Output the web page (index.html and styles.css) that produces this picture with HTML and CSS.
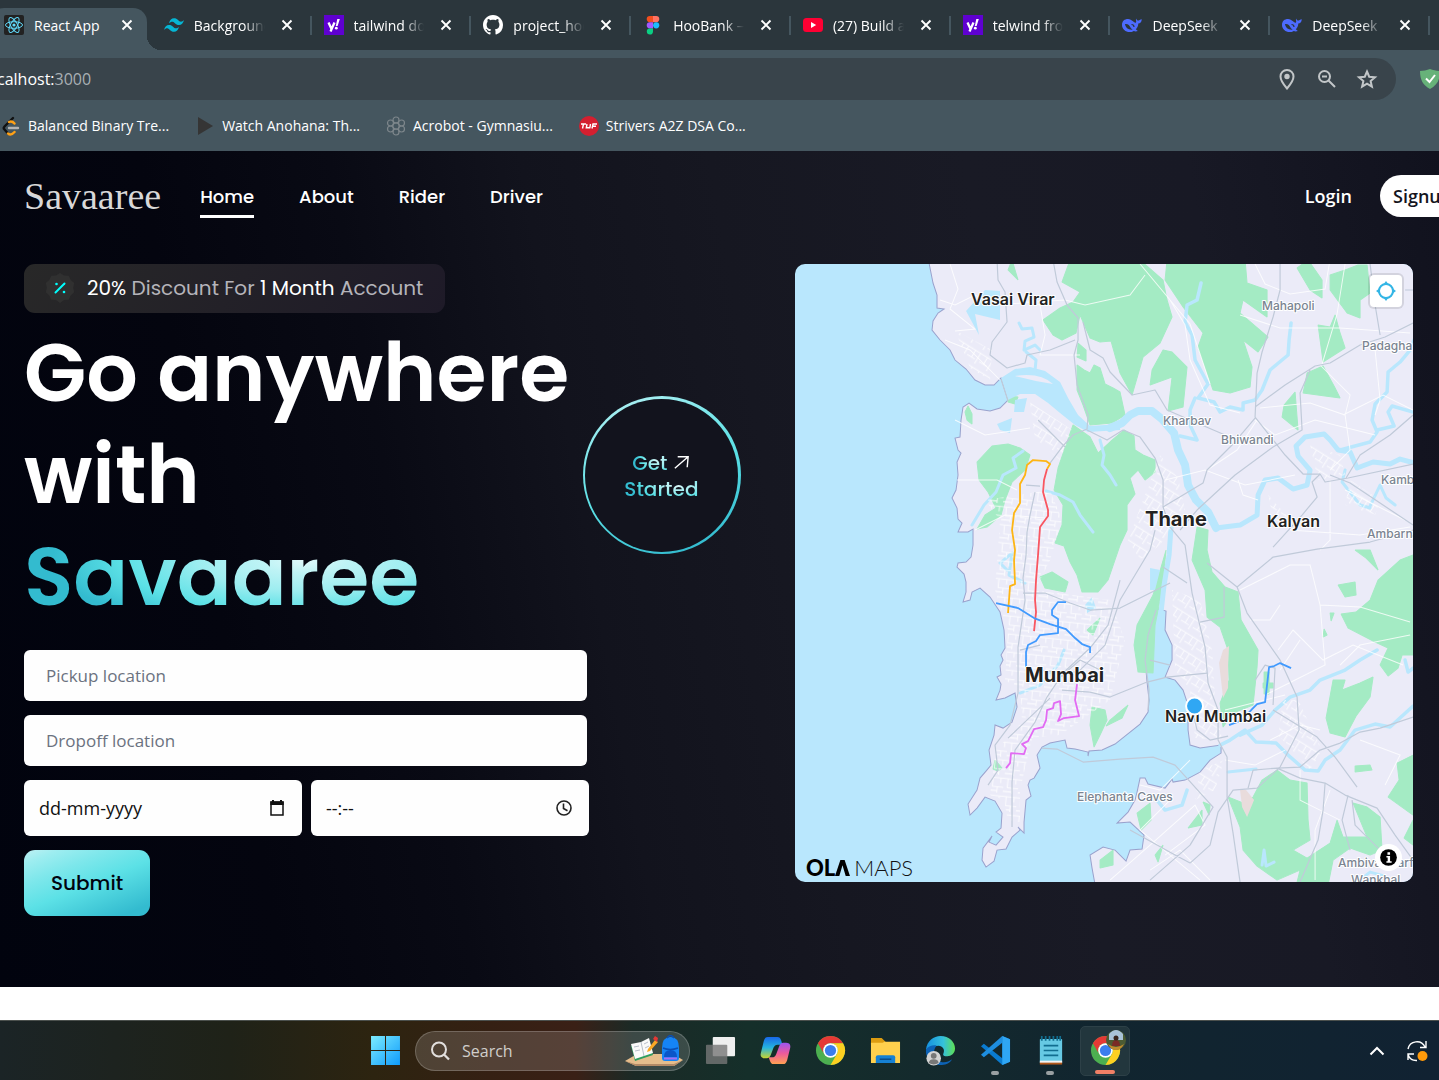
FILE: index.html
```html
<!DOCTYPE html>
<html lang="en">
<head>
  <meta charset="UTF-8">
  <meta name="viewport" content="width=device-width, initial-scale=1">
  <title>Savaaree</title>
  <link rel="stylesheet" href="styles.css">
</head>
<body>

<!-- shared icons -->
<svg class="defs" width="0" height="0" aria-hidden="true">
  <symbol id="close" viewBox="0 0 12 12"><path d="M1.5 1.5l9 9M10.5 1.5l-9 9" fill="none" stroke="#fff" stroke-width="1.9"/></symbol>
  <symbol id="yahoo" viewBox="0 0 20 20"><rect width="20" height="20" fill="#5f01d1"/><path d="M4.500 7.500l2.800 6M10.500 7.500L6.500 16.500" stroke="#fff" stroke-width="2.300" fill="none"/><path d="M15.800 4h-2.500l-1.500 7h1.800z" fill="#fff"/><circle cx="12.300" cy="13.200" r="1.400" fill="#fff"/></symbol>
  <symbol id="whale" viewBox="0 0 20 20"><path d="M0 10c0-4 2.500-6 6-6 2 0 3.500 1 5 2.300C12 7.500 13.500 8 14 7.500c.7-.7-.5-2 .1-4 .7 1.500 1.200 2 2 2 1 0 2-1 3.700-1.300-.3 3-1.500 4-3.500 4.300-.1 3-1.300 4.700-2.500 5.800l2 1.700c-2 .7-3 .4-4-.1C6.500 19 0 15.500 0 10z" fill="#4d6bfe"/><path d="M3 9c3-.5 4.500 1.500 5.500 3.500.5 1 1.500 1.800 2.500 2-4 .8-7.500-1.500-8-5.500z" fill="#2b363c"/><path d="M9.500 9.500c1.300 0 2.500 1 2.500 2.500" stroke="#2b363c" fill="none" stroke-width="1.200"/></symbol>
  <symbol id="chrome" viewBox="0 0 32 32">
    <circle cx="16" cy="16" r="15" fill="#4caf50"/>
    <path d="M3 8.500A15 15 0 0 1 29 8.500H16a7.500 7.500 0 0 0-6.500 11.300z" fill="#e53935"/>
    <path d="M29 8.500A15 15 0 0 1 16 31l6.500-11.200A7.500 7.500 0 0 0 16 8.500z" fill="#fdd021"/>
    <circle cx="16" cy="16" r="7.500" fill="#fff"/><circle cx="16" cy="16" r="5.800" fill="#3b7ded"/>
  </symbol>
</svg>

<header class="browser">
  <div class="tabs">
    <div class="tab active">
      <svg class="tab-icon" viewBox="0 0 20 20"><rect width="20" height="20" rx="2" fill="#222"/><g fill="none" stroke="#61dafb"><ellipse cx="10" cy="10" rx="8.500" ry="3.300"/><ellipse cx="10" cy="10" rx="8.500" ry="3.300" transform="rotate(60 10 10)"/><ellipse cx="10" cy="10" rx="8.500" ry="3.300" transform="rotate(120 10 10)"/></g><circle cx="10" cy="10" r="1.600" fill="#61dafb"/></svg>
      <span class="tab-title">React App</span>
      <button class="tab-close" aria-label="Close tab"><svg><use href="#close"/></svg></button>
    </div>
    <div class="tab">
      <svg class="tab-icon" viewBox="0 0 24 24"><path d="M6 10q1.500-6 6-6c4.500 0 5.100 3.400 7.300 3.900 1.700.4 3.200-.2 4.700-1.900q-1.500 6-6 6c-4.500 0-5.100-3.400-7.300-3.900C9 7.700 7.500 8.300 6 10zM0 18q1.500-6 6-6c4.500 0 5.100 3.400 7.300 3.900 1.700.4 3.200-.2 4.700-1.900q-1.500 6-6 6c-4.500 0-5.100-3.400-7.300-3.900C3 15.700 1.500 16.300 0 18z" fill="#06b6d4"/></svg>
      <span class="tab-title">Background Color</span>
      <button class="tab-close" aria-label="Close tab"><svg><use href="#close"/></svg></button>
    </div>
    <div class="tab">
      <svg class="tab-icon"><use href="#yahoo"/></svg>
      <span class="tab-title">tailwind docs</span>
      <button class="tab-close" aria-label="Close tab"><svg><use href="#close"/></svg></button>
    </div>
    <div class="tab">
      <svg class="tab-icon" viewBox="0 0 16 16"><path fill="#fff" d="M8 0C3.580 0 0 3.580 0 8c0 3.540 2.290 6.530 5.470 7.590.4.070.55-.17.55-.38 0-.19-.01-.82-.01-1.490-2.010.37-2.530-.49-2.690-.94-.09-.23-.48-.94-.82-1.130-.28-.15-.68-.52-.01-.53.63-.01 1.080.58 1.230.82.72 1.210 1.870.87 2.330.66.070-.52.28-.87.51-1.070-1.780-.2-3.640-.89-3.640-3.950 0-.87.310-1.590.82-2.150-.08-.2-.36-1.020.080-2.120 0 0 .67-.21 2.200.82.64-.18 1.320-.27 2-.27s1.360.09 2 .27c1.530-1.040 2.200-.82 2.200-.82.44 1.100.16 1.920.080 2.120.51.56.82 1.270.82 2.150 0 3.070-1.870 3.750-3.650 3.950.29.25.54.73.54 1.480 0 1.070-.01 1.930-.01 2.200 0 .21.150.46.55.38A8.010 8.010 0 0 0 16 8c0-4.420-3.580-8-8-8z"/></svg>
      <span class="tab-title">project_hoobank</span>
      <button class="tab-close" aria-label="Close tab"><svg><use href="#close"/></svg></button>
    </div>
    <div class="tab">
      <svg class="tab-icon" viewBox="0 0 20 20"><path d="M10 1H6.800a3.100 3.100 0 0 0 0 6.200H10z" fill="#f24e1e"/><path d="M10 1h3.200a3.100 3.100 0 0 1 0 6.200H10z" fill="#ff7262"/><path d="M10 7.200H6.800a3.100 3.100 0 0 0 0 6.200H10z" fill="#a259ff"/><circle cx="13.200" cy="10.300" r="3.100" fill="#1abcfe"/><path d="M10 13.400H6.800a3.100 3.100 0 1 0 3.200 3.100z" fill="#0acf83"/></svg>
      <span class="tab-title">HooBank — Figma</span>
      <button class="tab-close" aria-label="Close tab"><svg><use href="#close"/></svg></button>
    </div>
    <div class="tab">
      <svg class="tab-icon" viewBox="0 0 20 20"><rect y="3" width="20" height="14" rx="3.500" fill="#f03"/><path d="M8 7l5.200 3L8 13z" fill="#fff"/></svg>
      <span class="tab-title">(27) Build and Deploy</span>
      <button class="tab-close" aria-label="Close tab"><svg><use href="#close"/></svg></button>
    </div>
    <div class="tab">
      <svg class="tab-icon"><use href="#yahoo"/></svg>
      <span class="tab-title">telwind from</span>
      <button class="tab-close" aria-label="Close tab"><svg><use href="#close"/></svg></button>
    </div>
    <div class="tab">
      <svg class="tab-icon"><use href="#whale"/></svg>
      <span class="tab-title">DeepSeek</span>
      <button class="tab-close" aria-label="Close tab"><svg><use href="#close"/></svg></button>
    </div>
    <div class="tab">
      <svg class="tab-icon"><use href="#whale"/></svg>
      <span class="tab-title">DeepSeek</span>
      <button class="tab-close" aria-label="Close tab"><svg><use href="#close"/></svg></button>
    </div>
  </div>

  <div class="toolbar">
    <div class="address">
      <p class="url">calhost:<span>3000</span></p>
      <button aria-label="Location"><svg viewBox="0 0 24 24"><path d="M12 3c-3.700 0-6.500 2.800-6.500 6.500C5.500 14 12 21.500 12 21.500S18.500 14 18.500 9.500C18.500 5.800 15.700 3 12 3z"/><circle cx="12" cy="9.500" r="1.700" fill="#c2c6c8"/></svg></button>
      <button aria-label="Zoom"><svg viewBox="0 0 24 24"><circle cx="9.500" cy="9.500" r="5.500"/><path d="M13.500 13.500l6.500 6.500M7 9.500h5"/></svg></button>
      <button aria-label="Bookmark this page"><svg viewBox="0 0 24 24"><path d="M12 4.500l2.200 5.200 5.800.500-4.400 3.800 1.300 5.600-4.900-3-4.900 3 1.300-5.600L4 10.200l5.800-.500z"/></svg></button>
    </div>
    <svg class="shield" viewBox="0 0 22 22"><path d="M11 1C8 2 4 3 1 3c0 9 3 14 10 18 7-4 10-9 10-18-3 0-7-1-10-2z" fill="#67b279"/><path d="M7 10.500l3.500 3.500L16 7" fill="none" stroke="#fff" stroke-width="2"/></svg>
  </div>

  <nav class="bookmarks">
    <a href="#"><svg viewBox="0 0 20 20" fill="none" stroke-width="2.400" stroke-linecap="round"><path d="M12 2L3.500 10.500q-1.500 1.500 0 3L7 17.500" stroke="#111"/><path d="M8 6q3-1.500 5.500 1.500M7 17.500q3 2.500 6.500-1.500" stroke="#ffa116"/><path d="M8 12h9" stroke="#b3b3b3"/></svg>Balanced Binary Tre...</a>
    <a href="#"><svg viewBox="0 0 20 20"><path d="M3 1l15 9-15 9z" fill="#353535"/></svg>Watch Anohana: Th...</a>
    <a href="#"><svg viewBox="0 0 20 20" fill="none" stroke="#7d868b" stroke-width="1.200"><circle cx="10" cy="10" r="3.200"/><circle cx="10" cy="4" r="3"/><circle cx="10" cy="16" r="3"/><circle cx="4.500" cy="7" r="3"/><circle cx="15.500" cy="7" r="3"/><circle cx="4.500" cy="13" r="3"/><circle cx="15.500" cy="13" r="3"/></svg>Acrobot - Gymnasiu...</a>
    <a href="#"><svg viewBox="0 0 20 20"><circle cx="10" cy="10" r="10" fill="#d41f30"/><path d="M2 8h5M4.500 8l-1 4.500M8 8l-.7 3.800h3.500L11.500 8M13 12.500L14 8h4M13.500 10.300h3.500" fill="none" stroke="#fff" stroke-width="1.400"/></svg>Strivers A2Z DSA Co...</a>
  </nav>
</header>

<div class="hero">
  <nav class="navbar">
    <a href="#" class="logo">Savaaree</a>
    <ul class="nav-links">
      <li><a href="#" class="current">Home</a></li>
      <li><a href="#">About</a></li>
      <li><a href="#">Rider</a></li>
      <li><a href="#">Driver</a></li>
    </ul>
    <div class="account">
      <a href="#" class="login">Login</a>
      <button class="signup">Signup</button>
    </div>
  </nav>

  <main class="hero-body">
    <section>
      <div class="discount">
        <svg viewBox="0 0 32 32"><path d="M16 1l4 2.500 4.700.300 2 4.200 3.500 3-1 4.700 1 4.600-3.500 3.200-2 4.200-4.700.300L16 31l-4-3-4.700-.300-2-4.200-3.500-3.200 1-4.600-1-4.700 3.500-3 2-4.200L12 3.500z" fill="#303030"/><path d="M20.500 11.500l-9 9" stroke="#0ff" stroke-width="2" stroke-linecap="round"/><circle cx="12.500" cy="12" r="1.300" fill="#0ff"/><circle cx="20" cy="20" r="1.300" fill="#0ff"/></svg>
        <p><b>20%</b> Discount For <b>1 Month</b> Account</p>
      </div>

      <div class="headline">
        <h1>Go anywhere<br>with<br><span class="text-gradient">Savaaree</span></h1>
        <a href="#" class="get-started">
          <span class="get-started-inner">
            <span class="get-row"><span class="text-gradient">Get</span><svg viewBox="0 0 20 20" fill="none" stroke="#fff" stroke-width="1.500"><path d="M3 16L17 4M6 4h11l-1 11"/></svg></span>
            <span class="text-gradient">Started</span>
          </span>
        </a>
      </div>

      <form class="booking">
        <input class="place" type="text" placeholder="Pickup location" aria-label="Pickup location">
        <input class="place" type="text" placeholder="Dropoff location" aria-label="Dropoff location">
        <div class="when">
          <label class="picker">
            <input type="text" placeholder="dd-mm-yyyy" aria-label="Date">
            <svg viewBox="0 0 20 20"><path d="M4 4h12v13H4z" fill="none" stroke="#111" stroke-width="1.500"/><path d="M3.300 3.500h13.400V7H3.300zM5 2h2v2.500H5zM13 2h2v2.500h-2z" fill="#111"/></svg>
          </label>
          <label class="picker">
            <input type="text" placeholder="--:--" aria-label="Time">
            <svg viewBox="0 0 20 20" fill="none" stroke="#222" stroke-width="1.600"><circle cx="10" cy="10" r="7"/><path d="M9.500 5.500v5l4 2.300"/></svg>
          </label>
        </div>
        <button type="submit" class="submit">Submit</button>
      </form>
    </section>

    <section class="map">
      <svg class="map-canvas" viewBox="795 264 618 618" preserveAspectRatio="xMidYMid slice">
        <defs>
          <pattern id="streets" width="15" height="18" patternUnits="userSpaceOnUse" patternTransform="rotate(6)">
            <path d="M0 3h15M4 3v9M4 12h11M9 12v6M12 3v5M0 16h9" class="street"/>
          </pattern>
          <pattern id="streets-slant" width="14" height="16" patternUnits="userSpaceOnUse" patternTransform="rotate(32)">
            <path d="M0 4h14M5 4v8M0 12h9M11 4v12" class="street"/>
          </pattern>
        </defs>

        <rect x="795" y="264" width="618" height="618" fill="#b9e7fd"/>

        <!-- land -->
        <path class="land" d="M928 258L933 283 937 295 937 308 944 309 938 313 933 321 932 330 940 340 950 350 955 360 966 369 975 380 985 385 994 385 1001 378 1008 400 1000 408 990 411 977 409 969 403 963 407 961 420 960 437 955 438 958 450 961 453 957 462 958 475 956 490 952 498 957 508 958 519 962 523 958 532 968 532 973 529 973 545 971 557 966 562 958 563 957 567 964 574 966 582 966 592 963 602 970 600 972 592 980 588 990 597 1000 612 1004 630 1005 648 1001 655 1003 660 1000 666 1001 675 997 677 1001 684 1000 690 996 700 1005 698 1015 693 1017 707 1012 722 1003 728 995 725 994 735 989 750 991 765 986 771 980 778 977 790 968 804 970 815 977 808 985 797 995 801 1002 813 1001 828 996 832 1003 837 996 845 989 842 992 836 983 848 982 860 986 867 994 861 997 850 1006 849 1012 837 1020 830 1018 827 1024 833 1024 822 1026 800 1031 796 1028 785 1030 780 1034 778 1040 768 1037 755 1042 747 1050 743 1065 740 1067 748 1075 749 1088 752 1088 756 1089 751 1102 750 1115 744 1140 724 1148 712 1149 700 1147 682 1145 660 1148 635 1156 612 1155 608 1166 611 1165 630 1172 645 1172 660 1165 677 1175 680 1183 690 1188 705 1188 730 1190 745 1200 748 1221 745 1221 753 1210 760 1200 772 1185 780 1173 782 1172 779 1165 788 1148 784 1145 778 1140 778 1137 792 1135 800 1128 812 1117 823 1130 822 1144 835 1142 849 1130 850 1126 861 1115 850 1103 847 1090 855 1092 868 1096 890H1420V258Z"/>

        <!-- forest -->
        <g class="green">
          <path d="M1070 260L1062 282 1080 292 1073 302 1060 308 1043 320 1053 335 1062 340 1076 333 1080 315 1090 338 1100 342 1111 341 1120 373 1132 395 1143 357 1160 343 1172 317 1167 300 1163 280 1140 260Z"/>
          <path d="M1167 260L1165 280 1183 307 1203 333 1198 347 1213 390 1230 393 1250 387 1252 367 1243 340 1258 352 1268 337 1240 313 1243 300 1267 317 1267 290 1247 283 1245 260Z"/>
          <path d="M1150 385L1152 370 1163 350 1172 352 1187 367 1183 407 1168 411 1172 377Z"/>
          <path d="M1077 365L1084 370 1090 373 1094 365 1100 368 1105 384 1113 388 1120 392 1125 415 1112 423 1090 425 1083 405 1077 390Z"/>
          <path d="M1078 343L1086 350 1086 361 1077 357Z"/>
          <path d="M1297 268L1308 260 1322 280 1322 298 1310 290Z"/>
          <path d="M1330 275L1345 270 1358 265 1367 265 1370 293 1360 300 1360 318 1347 313 1330 290Z"/>
          <path d="M1318 325L1330 327 1335 315 1340 333 1345 348 1323 362Z"/>
          <path d="M1307 373L1323 366 1335 388 1340 398 1325 396 1303 393Z"/>
          <path d="M1295 392L1298 430 1282 417 1284 405Z"/>
          <path d="M1073 425L1090 437 1098 453 1112 440 1124 430 1134 436 1135 450 1143 455 1155 460 1155 472 1145 480 1138 470 1130 478 1135 494 1127 505 1127 530 1120 545 1108 580 1098 592 1082 592 1077 575 1070 562 1064 546 1055 543 1062 525 1063 505 1054 490 1058 468Z"/>
          <path d="M977 462L992 446 1008 444 1020 448 1030 455 1025 470 1012 482 1005 500 1001 515 987 527 977 529 985 515 996 508 988 492 979 480Z"/>
          <path d="M968 406L972 414 972 424 967 420 965 412ZM1008 396L1018 397 1015 404 1008 402Z"/>
          <path d="M1197 527L1208 530 1207 550 1212 572 1225 587 1238 592 1241 620 1258 650 1257 667 1253 705 1233 713 1223 727 1220 703 1229 680 1228 650 1220 627 1207 617 1205 590 1192 560Z"/>
          <path d="M1166 550L1153 595 1137 625 1134 645 1138 672 1153 673 1155 625 1162 590Z"/>
          <path d="M1413 555L1400 560 1378 580 1370 600 1356 612 1341 614 1348 628 1375 642 1388 648 1380 665 1388 676 1398 668 1402 655 1413 655ZM1338 585L1355 582 1356 595 1345 597ZM1330 613L1334 613 1331 621ZM1324 629L1327 635 1323 637Z"/>
          <path d="M1333 680L1345 680 1342 690 1360 683 1373 677 1370 697 1356 716 1345 737 1330 733 1326 718Z"/>
          <path d="M1228 797L1243 803 1253 797 1262 780 1277 770 1290 780 1307 783 1308 820 1310 840 1293 850 1307 858 1330 843 1337 820 1343 837 1367 837 1353 803 1367 807 1380 817 1382 850 1370 855 1350 848 1333 860 1327 890H1295L1300 870 1277 880 1257 866 1243 850 1240 827Z"/>
          <path d="M1397 763L1413 755V815L1388 797 1399 780ZM1413 820L1404 838 1413 845ZM1355 766L1370 765 1372 770 1355 772Z"/>
          <path d="M1137 813L1150 803 1151 820 1141 830ZM1188 828L1202 810 1202 825ZM1203 802L1210 805 1209 815Z"/>
          <path d="M1092 707L1105 710 1107 720 1100 735 1094 747 1090 725ZM1110 720L1128 705 1122 718 1106 726ZM1040 577L1052 572 1068 582 1065 592 1045 588ZM995 760L1002 768 998 771 993 769ZM1087 630L1100 618 1093 635ZM1012 260L1018 280 1008 270ZM1355 550L1370 550 1378 570 1366 558ZM1100 860L1113 850 1113 865 1100 868ZM1155 855L1163 845 1158 862Z"/>
          <path d="M1264 672h5v22h-5zM1263 683h10v5h-10z"/>
        </g>
        <path d="M1223 650l6-4-1 20 0 22-5 10-4-35zM1240 790l6 0 8 10-7 17-5-10z" fill="#e9dcdc"/>

        <!-- creeks -->
        <g fill="#b9e7fd">
          <path d="M1001 378L1015 369 1030 367 1045 371 1060 382 1068 398 1078 415 1090 426 1120 424V430L1088 432 1075 425 1060 413 1048 403 1035 394 1020 394 1008 400Z"/>
          <path d="M985 290L1000 291 1000 320 975 314 979 335 966 311ZM997 424L1012 418 1010 433 1000 430ZM1015 400L1027 398 1024 412 1014 412ZM1085 605L1092 597 1096 608 1087 613ZM1150 568L1160 570 1155 590 1150 590Z"/>
        </g>
        <path d="M1015 376q25-4 38 8-20-3-38-8z" fill="#ebebf8"/>
        <g class="creek">
          <path d="M1110 428L1122 423 1130 415 1138 411 1152 411 1162 419 1174 433 1178 450 1185 465 1188 485 1196 500 1208 512 1216 528" stroke-width="8"/>
          <path d="M1216 528L1240 525 1257 515 1258 495 1265 480 1278 478 1293 489 1307 485 1310 470 1298 456 1296 446 1305 437 1324 434 1330 440 1338 450 1350 452 1357 468 1373 462 1390 464 1400 459 1414 463" stroke-width="5"/>
          <path d="M1414 340L1410 350 1400 362 1388 372 1387 392 1375 404 1372 420 1377 432 1370 442 1340 450M1377 430L1394 426 1388 412 1392 406 1413 412M1291 323L1289 340 1288 355 1270 370 1262 390 1255 400 1243 403 1243 410 1230 407 1220 412 1214 402 1198 398 1208 384 1195 360 1192 335 1185 322 1187 305 1197 300 1201 283M1195 398L1190 410 1190 425 1197 440 1180 436" stroke-width="3.500"/>
          <path d="M1040 350L1035 345 1024 350 1025 341 1034 337 1032 328 1022 329 1019 323M1026 352L1036 360 1035 370M1023 451L1013 458 1016 468 1003 475 996 492 984 505 972 525M1046 491L1060 495 1073 502 1080 515 1093 532M1100 440L1104 455 1102 465 1110 475 1116 485M1007 570L1000 563 1012 553 1009 575 1025 583M1064 650L1058 665 1040 685 1020 693" stroke-width="3"/>
          <path d="M1171 527L1169 555 1164 585 1161 612 1160 640" stroke-width="5"/>
          <path d="M1220 745L1230 740 1245 730 1256 742 1276 743 1288 755 1305 770 1318 771 1325 760 1340 750 1355 730 1375 724 1390 727 1413 706M1240 735L1262 725 1275 710 1290 697 1310 690 1320 680 1345 670 1360 660 1377 650M1405 660L1408 672 1413 668M1157 800L1165 810 1182 805 1187 790" stroke-width="3.500"/>
          <path d="M1228 772L1256 769M1353 885L1370 872 1385 876M1262 865L1264 850 1266 866 1274 862M1395 505L1386 498 1380 485 1370 506M1345 470L1342 482 1360 505 1370 508" stroke-width="3"/>
        </g>

        <!-- street grids -->
        <g>
          <path fill="url(#streets)" d="M985 500L1050 490 1062 520 1050 560 1035 590 1110 600 1125 640 1110 700 1060 735 1032 738 1020 790 1020 822 1008 822 1004 800 990 795 996 750 1022 722 1020 690 1005 680 1008 630 995 590 1000 520Z"/>
          <path fill="url(#streets-slant)" d="M1030 402L1072 430 1060 460 1035 440ZM955 330L992 350 990 380 970 368ZM1160 455L1178 478 1185 510 1160 545 1140 560 1128 540ZM1172 590L1200 600 1212 650 1215 700 1222 740 1195 738 1190 690 1175 670ZM1310 445L1340 455 1345 475 1318 480ZM1268 495L1300 530 1275 527ZM1283 700L1298 700 1322 750 1310 770 1278 735ZM1200 770L1224 760 1215 790 1195 800ZM1350 480L1380 500 1375 515 1345 505Z"/>
        </g>
        <g class="street">
          <path d="M940 300l15 5 20-10 20 10 40-3 30-2 20 5 45-10 15-20M950 264l8 25-8 20 25 20-20 2M945 340l25 10 30 30M1020 300l20 5 5 30-5 20 40 0M955 420l30 15 45-7M957 480l40 0 20 10M975 530l30-15 40 3M1170 300l15 25 5 35 20 45 30 8M1140 264l50 60 20 60M1240 315l40 13 60 0 70 5M1255 264l10 20 25 10 35-5 5-30M1322 364l15-50 8-50M1320 365l30 30-5 20-35-12-50 5M1343 415l40-20 30 15M1345 415l5 35-20 20M1375 350l5 50-5 15M1255 420l20 15 40-15 60 15M1207 470l30-20 20-30M1165 480l40-10 40 15 50-10M1238 480l5 15 15 5M1330 480l0 60-10 10M1345 490l60 30M1290 530l70 5 50-8"/>
          <path d="M1240 590l50-25 20 0 10 40 40 2 50 15M1320 605l5 60-60 30M1250 620l20 0 10-15M1278 650l15-20 30 30 30-15 50 20M1300 640l-20 30M1340 665l20-20 50-10M1270 740l30-15 20 5M1300 770l0 30 40 20M1330 790l-15 40 0 50M1360 740l40 15-15 30M1150 870l30-20 30 30M1110 880l40-35 45-40 10 20-40 30M1170 800l-30 30 60 50M1190 760l-30 30-20-5M1225 710l60-15M1225 760l30 5 30-15"/>
        </g>

        <!-- main roads -->
        <g class="road">
          <path d="M997 260L998 280 1005 292 1007 322 992 342 990 355 1007 368 1025 363 1027 355 1050 350 1075 340M1053 260L1057 282 1067 305 1078 318 1078 340 1074 355 1077 385 1088 415 1087 429 1073 435 1062 447 1050 463M1083 322L1090 350 1103 358 1110 372 1132 395 1155 390 1167 410 1190 420 1225 435"/>
          <path d="M1280 260L1280 290 1273 317 1262 352 1257 373 1255 417 1285 455 1303 474 1320 474 1325 482 1348 478 1413 464M1413 323L1385 337 1360 345 1330 363 1315 366 1285 385 1255 407M1310 370L1300 393 1302 430 1273 447 1235 475 1197 510 1180 530M1255 418L1232 445 1207 470 1203 483 1163 507"/>
          <path d="M1087 430L1107 440 1123 430 1140 437 1155 458 1163 480 1163 507 1170 527 1185 545 1192 593 1205 647 1208 683 1218 710 1218 740 1227 757 1227 797 1233 833 1240 882"/>
          <path d="M1320 474L1312 482 1317 497 1302 515 1273 547M1207 563L1237 587 1247 613 1280 660 1297 697 1299 730 1280 767 1257 788 1233 790 1218 812 1210 845 1190 863M1237 587L1273 557 1317 549 1370 542 1413 530M1330 475L1350 483 1413 525M1346 478L1360 455 1390 435 1413 415"/>
          <path d="M1273 710L1317 737 1335 757 1357 787M1413 717L1380 728 1360 732 1340 743 1320 750 1300 767 1277 768 1253 770 1248 788M1277 768L1300 778 1325 783 1345 795 1377 808 1395 835 1413 860M1325 783L1323 810 1318 840 1300 882M1348 795L1342 820 1350 850M1352 800L1355 825 1380 850"/>
          <path d="M1035 492L1030 515 1027 532 1026 555 1023 578 1025 600 1018 647 1018 693 1010 725 995 745 998 770 988 785M1120 580L1108 625 1090 648 1063 673 1047 697 1035 722 1015 750 1012 782 1012 827M1023 593L1045 593 1070 603 1090 610 1120 608 1170 583M1026 485L1040 486M1042 748L1057 749 1083 762 1120 759 1153 757 1175 765 1213 807 1190 845 1150 880M1062 690L1090 692 1110 697 1147 682 1167 677 1207 673M1224 587L1224 617 1200 622M1130 830L1175 855 1190 863M1155 530L1150 550 1135 575 1120 600 1105 645 1080 670 1050 680M1163 567L1187 583M1020 650L1040 645M1040 670L1065 673 1080 660 1100 670M1008 738L1050 698"/>
          <path d="M1156 610L1148 635 1145 660 1149 690 1148 710M1370 264L1375 305 1380 335M1405 290h8M1038 420L1065 447M1001 379L1008 401M1150 660L1170 665M1255 680L1265 665 1275 668 1273 705M1190 700L1197 730 1210 740 1228 736"/>
        </g>

        <!-- metro lines -->
        <g fill="none" stroke-width="1.800" stroke-linejoin="round">
          <path stroke="#fdb515" d="M1008 613L1010 586 1015 584 1014 560 1015 550 1012 530 1014 513 1020 503 1020 484 1025 475 1027 465 1033 460 1046 461 1050 464 1047 469"/>
          <path stroke="#f95661" d="M1047 469L1044 480 1043 492 1048 510 1048 516 1040 527 1038 555 1036 580 1035 600 1036 612 1034 631"/>
          <path stroke="#419afe" d="M996 603L1018 608 1034 618 1050 624 1066 629 1075 638 1082 644 1090 647 1090 653M1066 602L1058 602 1052 610 1052 615 1058 619 1058 633 1040 635 1036 641 1028 645 1026 652 1026 667M1229 725L1242 720 1252 709 1257 704 1265 702 1269 667 1274 666 1280 663 1291 668"/>
          <path stroke="#e26bf3" d="M1077 684L1075 700 1079 716 1064 718 1058 721 1061 714 1060 701 1054 703 1053 708 1047 710 1046 720 1043 727 1034 729 1028 741 1022 744 1026 748 1024 754 1011 753 1010 763 1006 768"/>
        </g>

        <g class="city">
          <text x="971" y="305">Vasai Virar</text>
          <text x="1267" y="527">Kalyan</text>
          <text x="1165" y="722">Navi Mumbai</text>
          <text class="big" x="1145" y="526">Thane</text>
          <text class="big" x="1025" y="682">Mumbai</text>
        </g>
        <g class="town">
          <text x="1262" y="310">Mahapoli</text>
          <text x="1362" y="350">Padagha</text>
          <text x="1163" y="425">Kharbav</text>
          <text x="1221" y="444">Bhiwandi</text>
          <text x="1381" y="484">Kambe</text>
          <text x="1367" y="538">Ambarnath</text>
          <text x="1077" y="801">Elephanta Caves</text>
          <text x="1338" y="867">Ambivali Tarf</text>
          <text x="1351" y="884">Wankhal</text>
        </g>
        <circle cx="1194.500" cy="706" r="8.500" fill="#30a7f3" stroke="#fff" stroke-width="2"/>
      </svg>
      <button class="locate" aria-label="Find my location"><svg viewBox="0 0 20 20"><circle cx="10" cy="10" r="7" fill="none" stroke="#33b5e5" stroke-width="2"/><path d="M10 0l3 4H7zM10 20l3-4H7zM0 10l4-3v6zM20 10l-4-3v6z" fill="#33b5e5"/></svg></button>
      <a href="#" class="ola"><b>OL<svg viewBox="0 0 14 15"><path d="M0 15L5 0h4l5 15h-4L7 5 4 15z"/></svg></b> MAPS</a>
      <button class="info" aria-label="Attribution"><svg viewBox="0 0 24 24"><circle cx="12" cy="12" r="8" fill="#000"/><path d="M11 7h2.500v2.300H11zM10 10.500h3.500v5H15V17h-5v-1.500h1.200V12H10z" fill="#fff"/></svg></button>
    </section>
  </main>
</div>

<footer class="taskbar">
  <div class="apps">
    <button class="app" aria-label="Start"><svg viewBox="0 0 30 30"><linearGradient id="win" x2="1" y2="1" gradientUnits="objectBoundingBox"><stop stop-color="#7cecff"/><stop offset="1" stop-color="#0f9bfb"/></linearGradient><path fill="url(#win)" d="M1 1h13.500v13.500H1zM15.500 1H29v13.500H15.500zM1 15.500h13.500V29H1zM15.500 15.500H29V29H15.500z"/></svg></button>
    <label class="search">
      <svg class="glass" viewBox="0 0 20 20"><circle cx="9" cy="8.500" r="7" fill="none" stroke="#e2dfdd" stroke-width="2"/><path d="M14 13.500l5 5" stroke="#e2dfdd" stroke-width="2.300"/></svg>
      <input type="search" placeholder="Search" aria-label="Search">
      <svg class="doodle" viewBox="0 0 58 32"><path d="M0 26l12-7h36l10 6-9 6H11z" fill="#e5bd8c"/><path d="M0 26l10 3h39l9-4-9 6H11z" fill="#b38a66"/><path d="M6 11l18-6 4 15-18 6z" fill="#2f9e60"/><path d="M6 9l10-2 8-4 4 15-9 3-9 3z" fill="#fafafa"/><path d="M16 7l3 14M9 12l5-1M10 16l5-1M19 9l4-2M20 13l4-2" stroke="#b8bfca"/><path d="M23 14l7-9 3 2-8 9-3 1z" fill="#f9a825"/><path d="M28 4l4 3 1-4-3-2z" fill="#e53935"/><path d="M37 13q0-11 8.500-11T54 13v10q0 3-3 3H40q-3 0-3-3z" fill="#1584f5"/><path d="M39 22q0-7 6.500-7t6.500 7z" fill="#0a56c9"/><path d="M42 3q3.500-5 7 0M38 13q7 3 15 0" stroke="#0a4fb5" fill="none" stroke-width="1.500"/><path d="M39 23.500h13" stroke="#a46cf5" stroke-width="2"/></svg>
    </label>
    <button class="app" aria-label="Task view"><svg viewBox="0 0 32 30"><rect x="8" y="1" width="23" height="20" rx="1" fill="#efefef"/><rect x="1" y="9" width="22" height="20" rx="1" fill="#777" opacity=".8"/></svg></button>
    <button class="app" aria-label="Copilot"><svg viewBox="0 0 32 32"><defs><linearGradient id="cpa" x2="0" y2="1"><stop stop-color="#1867e8"/><stop offset=".5" stop-color="#25b3e0"/><stop offset="1" stop-color="#c9d42e"/></linearGradient><linearGradient id="cpb" x2="0" y2="1"><stop stop-color="#9a55f2"/><stop offset=".5" stop-color="#ee5a9b"/><stop offset="1" stop-color="#ffa252"/></linearGradient></defs><path d="M8 2h10c2 0 3 1 4 4l1 4h-5c-2 0-3 1-4 3l-3 8c-1 2-2 3-4 3H5c-4 0-5-2-4-6L4 6c1-3 2-4 4-4z" fill="url(#cpa)"/><path d="M24 30H14c-2 0-3-1-4-4l-1-3h3c3 0 4-1 5-4l3-8c1-2 2-3 4-3h3c4 0 5 3 4 6l-3 12c-1 3-2 4-4 4z" fill="url(#cpb)"/></svg></button>
    <button class="app" aria-label="Chrome"><svg><use href="#chrome"/></svg></button>
    <button class="app" aria-label="File Explorer"><svg viewBox="0 0 32 32"><path d="M1 3h11l4 4v3H1z" fill="#dc9c11"/><path d="M1 8h12l2-1h16v22H1z" fill="#ffd04d"/><path d="M6 29v-6q0-2 2-2h16q2 0 2 2v6z" fill="#1681d4"/><path d="M10 25h12" stroke="#0b4c87" stroke-width="1.500"/></svg></button>
    <button class="app" aria-label="Edge"><svg viewBox="0 0 32 32"><defs><linearGradient id="edge"><stop stop-color="#1590e0"/><stop offset=".6" stop-color="#35c1da"/><stop offset="1" stop-color="#5fe052"/></linearGradient></defs><path d="M1 15C2 6 9 1 16 1c9 0 15 6 15 13 0 5-4 8-8 8-3 0-5-1-4-3 2-4-1-8-5-8-6 0-11 4-13 4z" fill="url(#edge)"/><path d="M1 15c3-4 8-5 11-4-4 4-3 11 1 15 4 3 10 3 15-1-3 5-8 6-12 6C7 31 0 24 1 15z" fill="#0d62b5"/><circle cx="9" cy="24" r="7.500" fill="#d3d3d3"/><circle cx="9" cy="21.500" r="3" fill="#777"/><path d="M4 29q0-4 5-4t5 4q-5 3-10 0z" fill="#777"/></svg></button>
    <button class="app running" aria-label="Visual Studio Code"><svg viewBox="0 0 32 32"><path d="M23 1l8 3.500v23L23 31 1 11.500 4 9l19 15z" fill="#0a7bd0"/><path d="M23 1L1 20.500 4 23l19-15z" fill="#1e8ee0"/><path d="M23 1l8 3.500v23L23 31z" fill="#2fa6f4"/></svg></button>
    <button class="app running" aria-label="Notepad"><svg viewBox="0 0 32 32"><rect x="5" y="4" width="23" height="26" rx="1" fill="#66c9e4"/><path d="M5 28h23v2.500H5z" fill="#b4591c"/><path d="M5 26.500h23v2H5z" fill="#f4f4f4"/><path d="M7 1v5M11 1v5M15 1v5M19 1v5M23 1v5M26 1v5M9 11h15M9 16h15M9 21h15" stroke="#116d8f" stroke-width="1.800"/></svg></button>
    <button class="app open" aria-label="Chrome"><svg><use href="#chrome"/></svg>
      <svg class="profile" viewBox="0 0 20 20"><circle cx="10" cy="10" r="10" fill="#4c5b33"/><path d="M3 4q7-8 14 0v6H3z" fill="#a9c3d8"/><path d="M6 16q0-6 4-6t4 6z" fill="#7a2b25"/><circle cx="10" cy="8" r="2.500" fill="#38251d"/><path d="M2 14q8 6 16 0-3 6-8 6t-8-6z" fill="#c08a2d"/></svg>
    </button>
  </div>
  <div class="tray">
    <button aria-label="Show hidden icons"><svg viewBox="0 0 24 24"><path d="M5.500 15.500L12 9l6.500 6.500" fill="none" stroke="#fff" stroke-width="2"/></svg></button>
    <button aria-label="Updates"><svg viewBox="0 0 24 24"><path d="M3 10a9 9 0 0 1 17-2M21 2v6.500h-6M3 21v-6h6M3 15.500a9 9 0 0 0 9 6" fill="none" stroke="#fff" stroke-width="1.400"/><circle cx="17.500" cy="17" r="5" fill="#ff9a0a"/></svg></button>
  </div>
</footer>

</body>
</html>
```

FILE: styles.css
```css
* { box-sizing: border-box; }
body { margin: 0; min-height: 100vh; display: flex; flex-direction: column; background: #fff; font-family: "Segoe UI", "Open Sans", sans-serif; overflow-x: hidden; }
a { color: inherit; text-decoration: none; }
button { border: 0; padding: 0; background: none; color: inherit; font: inherit; cursor: pointer; }
input { border: 0; outline: 0; font: inherit; }
h1, p, ul { margin: 0; padding: 0; }
svg { display: block; }
.defs { position: absolute; }

/* browser */
.browser { background: #45565f; color: #fff; overflow: hidden; }
.tabs { display: flex; height: 50px; margin-left: -10px; padding-right: 11px; background: #2b363c; }
.tab { position: relative; flex: 1; min-width: 0; display: flex; align-items: center; padding: 0 13px 0 14px; }
.tab::after { content: ""; position: absolute; right: -2px; top: 16px; width: 2px; height: 19px; background: #45565f; }
.tab.active::before { content: ""; position: absolute; left: 0; right: 3px; top: 8px; bottom: 0; background: #45565f; border-radius: 14px 14px 0 0; }
.tab.active::after { right: -11px; top: 36px; width: 14px; height: 14px; background: radial-gradient(circle at 100% 0, #2b363c 14px, #45565f 14px); }
.tab > * { position: relative; }
.tab-icon { flex: none; width: 20px; height: 20px; margin-right: 10px; }
.tab-title { flex: 1; overflow: hidden; white-space: nowrap; font-size: 14px; -webkit-mask-image: linear-gradient(90deg, #000 70%, transparent); mask-image: linear-gradient(90deg, #000 70%, transparent); }
.active .tab-title { -webkit-mask-image: none; mask-image: none; }
.tab-close { flex: none; width: 20px; height: 20px; margin-left: 12px; display: grid; place-items: center; }
.tab-close svg { width: 12px; height: 12px; }
.toolbar { display: flex; align-items: center; gap: 22px; padding-top: 8px; margin-right: -3px; }
.address { flex: 1; display: flex; align-items: center; gap: 16px; height: 42px; padding-right: 17px; background: #39444b; border-radius: 0 21px 21px 0; }
.url { flex: 1; margin-left: -3px; font-size: 16px; }
.url span { color: #a9b0b4; }
.address button svg { width: 24px; height: 24px; fill: none; stroke: #c2c6c8; stroke-width: 2; }
.shield { flex: none; width: 24px; height: 22px; }
.bookmarks { display: flex; gap: 26px; height: 51px; align-items: center; padding-left: 1px; font-size: 14px; }
.bookmarks a { display: flex; align-items: center; gap: 7px; }
.bookmarks svg { width: 20px; height: 20px; }

/* landing page */
.hero { padding: 24px 26px 71px 24px; overflow: hidden; color: #fff; font-family: "Poppins", "Inter", sans-serif; background: linear-gradient(80deg, #01030e 0%, #04050f 18%, #090a14 30%, #12131d 42%, #161721 54%, #191a25 70%, #181925 84%, #11121e 100%); }
.navbar { display: flex; align-items: center; height: 42px; }
.logo { font-family: "Liberation Serif", serif; font-size: 38px; line-height: 42px; color: #d8d8d8; margin-right: 39px; }
.nav-links { display: flex; gap: 45px; list-style: none; font-size: 18px; font-weight: 500; }
.nav-links a { display: block; padding: 9px 0 5px; line-height: 26px; border-bottom: 3px solid transparent; }
.nav-links .current { border-color: #fff; }
.account { display: flex; align-items: center; gap: 28px; margin: 0 -57px 0 auto; font: 600 18px "Segoe UI", "Open Sans", sans-serif; }
.signup { width: 90px; height: 42px; padding-left: 13px; border-radius: 21px; background: #fff; color: #14141d; text-align: left; }
.hero-body { display: grid; grid-template-columns: minmax(0, 1fr) 44.5%; gap: 54px; align-items: start; margin-top: 47px; }
.discount { display: inline-flex; align-items: center; gap: 11px; height: 49px; padding: 0 22px 2px 20px; border-radius: 11px; background: linear-gradient(125deg, #282828, #1e1a28); font-size: 20px; color: #b5b4ba; }
.discount svg { width: 32px; height: 32px; }
.discount b { font-weight: 400; color: #fff; }
.headline { display: flex; align-items: center; justify-content: space-between; margin-top: 9px; }
h1 { font-size: 81px; line-height: 102px; font-weight: 600; white-space: nowrap; }
.text-gradient { background: radial-gradient(64% 64% at 71% 36%, #def9fa 1%, #bef3f5 17%, #9dedf0 42%, #7de7eb 55%, #5ce1e6 72%, #33bbcf 100%); -webkit-background-clip: text; background-clip: text; color: transparent; }
.get-started { flex: none; width: 158px; height: 158px; padding: 3px 3px 2px 2px; border-radius: 50%; background: linear-gradient(158deg, #bff0f3 0%, #9dedf0 15%, #7de7eb 30%, #5ce1e6 52%, #33bbcf 90%); }
.get-started-inner { height: 100%; display: flex; flex-direction: column; align-items: center; justify-content: center; border-radius: 50%; background: #12131d; font-size: 20px; line-height: 26px; font-weight: 500; }
.get-row { display: flex; align-items: center; gap: 4px; }
.get-row svg { width: 19px; height: 19px; }
.booking { display: flex; flex-direction: column; gap: 14px; max-width: 563px; margin-top: 22px; font: 17px "Segoe UI", "Open Sans", sans-serif; }
.place { height: 51px; padding: 0 22px; border-radius: 6px; background: #fefefe; color: #111; }
.place::placeholder { color: #6b7280; }
.when { display: grid; grid-template-columns: 1fr 1fr; gap: 9px; }
.picker { display: flex; align-items: center; height: 56px; padding: 0 15px; border-radius: 6px; background: #fefefe; font-size: 18px; }
.picker input { flex: 1; min-width: 0; padding: 0; background: none; }
.picker input::placeholder { color: #111; }
.picker svg { width: 20px; height: 20px; }
.submit { align-self: flex-start; height: 66px; padding: 0 27px; border-radius: 11px; color: #00040f; font: 500 20px "Poppins", "Inter", sans-serif; background: linear-gradient(158deg, #bff0f3 0%, #9dedf0 12%, #7de7eb 30%, #5ce1e6 52%, #33bbcf 90%); }

/* map */
.map { position: relative; aspect-ratio: 1; border-radius: 10px; overflow: hidden; }
.map-canvas { width: 100%; height: 100%; }
.land { fill: #ebebf8; stroke: #9aa2cd; stroke-width: 1; }
.green { fill: #a4ebc4; stroke: #a4ebc4; stroke-width: 1; stroke-linejoin: bevel; }
.creek { fill: none; stroke: #b9e7fd; stroke-linejoin: round; stroke-linecap: round; }
.street { fill: none; stroke: #fff; stroke-width: 1; opacity: .8; }
.road { fill: none; stroke: #c0cad9; stroke-width: 1.2; stroke-linejoin: round; }
.city, .town { font-family: "Inter", sans-serif; paint-order: stroke; stroke: #fff; stroke-width: 2; stroke-linejoin: round; }
.city { font-size: 16px; font-weight: 600; fill: #222; }
.city .big { font-size: 20px; font-weight: 700; }
.town { font-size: 12px; font-weight: 500; fill: #7a8491; }
.locate { position: absolute; top: 11px; right: 11px; width: 32px; height: 32px; display: grid; place-items: center; border-radius: 4px; background: #fff; box-shadow: 0 0 0 2px rgba(0, 0, 0, .1); }
.locate svg { width: 20px; height: 20px; }
.ola { position: absolute; left: 11px; bottom: 1px; display: flex; gap: 4px; color: #111; font: 300 22px/26px "Lato", sans-serif; }
.ola b { display: flex; align-items: center; font-weight: 900; color: #000; }
.ola svg { width: 15px; height: 16px; }
.info { position: absolute; right: 11px; bottom: 11px; width: 27px; height: 27px; display: grid; place-items: center; border-radius: 50%; background: #fff; }
.info svg { width: 25px; height: 25px; }

/* taskbar */
.taskbar { display: grid; grid-template-columns: 1fr auto 1fr; align-items: center; height: 60px; margin-top: auto; padding-left: 51px; border-top: 1px solid #4b504d; background: linear-gradient(90deg, #1b2426 0%, #1f2218 16%, #2d2410 26%, #352013 34%, #3a2016 40%, #1b2a26 44%, #152f2a 52%, #142a2d 64%, #11252f 76%, #112232 100%); }
.apps { grid-column: 2; display: flex; align-items: center; gap: 5px; }
.app { position: relative; width: 50px; height: 50px; display: grid; place-items: center; border-radius: 5px; }
.app > svg { width: 31px; height: 31px; }
.app.running::after, .app.open::after { content: ""; position: absolute; bottom: 1px; left: 21px; width: 8px; height: 4px; border-radius: 2px; background: #9aa0a2; }
.app.open { background: #22363d; border: 1px solid #2d4047; }
.app.open::after { left: 14px; width: 20px; background: #f08066; }
.app .profile { position: absolute; top: 3px; right: 3px; width: 20px; height: 20px; }
.search { width: 275px; height: 40px; display: flex; align-items: center; gap: 12px; padding: 0 6px 0 14px; border: 1px solid rgba(255, 255, 255, .2); border-radius: 20px; background: rgba(255, 255, 255, .15); }
.glass { flex: none; width: 20px; height: 20px; }
.search input { flex: 1; min-width: 0; padding: 0; background: none; color: #fff; font-size: 16px; }
.search input::placeholder { color: #d0cecb; }
.doodle { flex: none; width: 58px; height: 32px; }
.tray { display: flex; gap: 16px; justify-self: end; padding-right: 10px; }
.tray svg { width: 24px; height: 24px; }
```
